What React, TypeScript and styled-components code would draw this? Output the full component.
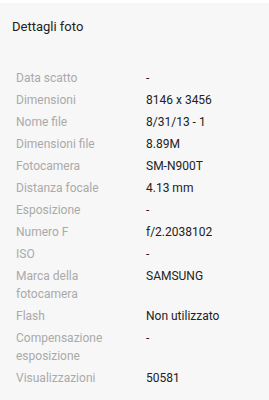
import React from 'react';
import styled, { createGlobalStyle } from 'styled-components';

const GlobalStyle = createGlobalStyle`
  html, body {
    margin: 0;
    padding: 0;
    background: #ffffff;
  }
  body {
    font-family: Roboto, "Liberation Sans", sans-serif;
  }
`;

type Detail = { label: string; value: string };

const details: Detail[] = [
  { label: 'Data scatto', value: '-' },
  { label: 'Dimensioni', value: '8146 x 3456' },
  { label: 'Nome file', value: '8/31/13 - 1' },
  { label: 'Dimensioni file', value: '8.89M' },
  { label: 'Fotocamera', value: 'SM-N900T' },
  { label: 'Distanza focale', value: '4.13 mm' },
  { label: 'Esposizione', value: '-' },
  { label: 'Numero F', value: 'f/2.2038102' },
  { label: 'ISO', value: '-' },
  { label: 'Marca della fotocamera', value: 'SAMSUNG' },
  { label: 'Flash', value: 'Non utilizzato' },
  { label: 'Compensazione esposizione', value: '-' },
  { label: 'Visualizzazioni', value: '50581' },
];

const App: React.FC = () => {
  return (
    <>
      <GlobalStyle />
      <Panel>
        <Title>Dettagli foto</Title>
        <DetailList>
          {details.map((d) => (
            <DetailRow key={d.label}>
              <Label>{d.label}</Label>
              <Value>{d.value}</Value>
            </DetailRow>
          ))}
        </DetailList>
      </Panel>
    </>
  );
};

const Panel = styled.div`
  width: 269px;
  height: 397px;
  margin-top: 3px;
  background: #f7f7f7;
  box-sizing: border-box;
  padding: 0 0 0 12px;
`;

const Title = styled.div`
  padding-top: 16px;
  font-size: 13px;
  line-height: 16px;
  color: #222222;
`;

const DetailList = styled.div`
  display: flex;
  flex-direction: column;
  gap: 4px;
  padding: 34px 0 0 4px;
`;

const DetailRow = styled.div`
  display: grid;
  grid-template-columns: 130px 1fr;
  font-size: 12px;
  line-height: 18px;
`;

const Label = styled.div`
  color: #aaaaaa;
  padding-right: 14px;
`;

const Value = styled.div`
  color: #222222;
`;

export default App;
